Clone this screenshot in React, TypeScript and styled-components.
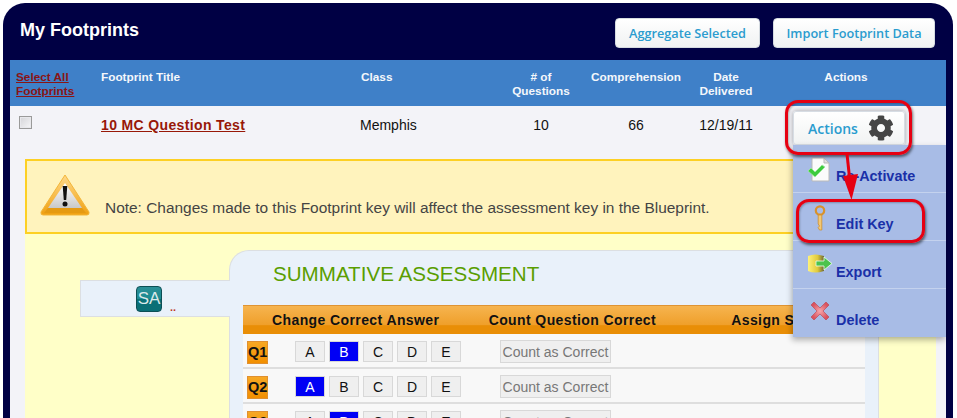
import styled, { createGlobalStyle } from "styled-components";
import { FaCog } from "react-icons/fa";

const questions = [
  { id: "Q1", correct: "B" },
  { id: "Q2", correct: "A" },
  { id: "Q3", correct: "B" },
];
const choices = ["A", "B", "C", "D", "E"];

const GlobalStyle = createGlobalStyle`
  html, body {
    margin: 0;
    padding: 0;
    background: #fff;
    font-family: "Liberation Sans", Arial, sans-serif;
  }
`;

const Page = styled.div`
  position: relative;
  width: 957px;
  height: 418px;
  overflow: hidden;
  padding: 3px 4px 0 3px;
  box-sizing: border-box;
`;

const Panel = styled.div`
  height: 415px;
  background: #000044;
  border-radius: 22px 22px 0 0;
  padding: 0 7px;
`;

const TopBar = styled.header`
  height: 57px;
  display: flex;
  align-items: flex-start;
  padding: 15px 11px 0 10px;
  box-sizing: border-box;
`;

const Title = styled.h1`
  margin: 0 auto 0 0;
  font-size: 18px;
  line-height: 24px;
  font-weight: 700;
  color: #fff;
`;

const TopButton = styled.button`
  height: 30px;
  margin-left: 13px;
  padding: 0;
  width: ${(p: { $w: number }) => p.$w}px;
  background: linear-gradient(#fff, #f0f2f2);
  border: 1px solid #d5dbe0;
  border-radius: 4px;
  color: #2a9ccf;
  font-family: "Open Sans", sans-serif;
  font-size: 12.7px;
  font-weight: 600;
`;

const gridColumns = "91px 260px 140px 80px 110px 70px 170px";

const HeadRow = styled.div`
  height: 46px;
  display: grid;
  grid-template-columns: ${gridColumns};
  background: #3f80c8;
  padding-top: 10px;
  box-sizing: border-box;
  color: #f4f7fb;
  font-size: 11.8px;
  font-weight: 700;
  line-height: 14px;
`;

const HeadCell = styled.div<{ $center?: boolean }>`
  text-align: ${(p) => (p.$center ? "center" : "left")};
`;

const SelectAll = styled.a`
  display: block;
  padding-left: 6px;
  color: #8a1414;
  text-decoration: underline;
`;

const Body = styled.div`
  height: 312px;
  background: #f3f3f8;
  overflow: hidden;
`;

const ItemRow = styled.div`
  height: 53px;
  display: grid;
  grid-template-columns: ${gridColumns};
  font-size: 14px;
  color: #111;
`;

const ItemCell = styled.div<{ $center?: boolean; $shift?: number }>`
  padding-top: 11px;
  margin-left: ${(p) => p.$shift ?? 0}px;
  line-height: 16px;
  text-align: ${(p) => (p.$center ? "center" : "left")};
`;

const Check = styled.input`
  appearance: none;
  box-sizing: border-box;
  display: block;
  margin: 10px 0 0 9px;
  width: 13px;
  height: 13px;
  background: linear-gradient(135deg, #d4d4d8, #f6f6f8);
  border: 1px solid #9a9a9a;
  box-shadow: inset 0 0 0 1px #e8e8ec;
`;

const ItemLink = styled.a`
  font-size: 14px;
  font-weight: 700;
  letter-spacing: 0.36px;
  color: #981808;
  text-decoration: underline;
`;

const ActionsButton = styled.button`
  margin: 5px 0 0 32px;
  width: 112px;
  height: 34px;
  display: flex;
  align-items: center;
  gap: 10px;
  padding: 0 0 0 14px;
  background: linear-gradient(#fff, #f1f3f3);
  border: 1px solid #d7dde4;
  border-radius: 3px;
  box-shadow: 0 0 5px rgba(0, 0, 0, 0.35);
  color: #2a9ccf;
  font-family: "Open Sans", sans-serif;
  font-size: 14px;
  font-weight: 600;

  svg {
    color: #454545;
  }
`;

const Detail = styled.div`
  margin: 0 10px 0 15px;
`;

const Notice = styled.div`
  height: 75px;
  box-sizing: border-box;
  display: flex;
  gap: 15px;
  padding: 13px 0 0 13px;
  background: #fff3bd;
  border: 2px solid #fdd024;
  color: #444;
  font-size: 15.45px;

  span {
    margin-top: 25px;
    line-height: 18px;
    white-space: nowrap;
  }
`;

const KeyArea = styled.div`
  height: 185px;
  display: flex;
  align-items: flex-start;
  padding: 16px 0 0 55px;
  background: #ffffc8;
`;

const SideTab = styled.div`
  position: relative;
  z-index: 1;
  width: 150px;
  height: 37px;
  margin-top: 30px;
  margin-right: -1px;
  display: flex;
  padding: 5px 0 0 55px;
  box-sizing: border-box;
  background: #e9f1fa;
  border: 1px solid #dcdfe2;
  border-right: 0;
`;

const Badge = styled.div`
  width: 26px;
  height: 26px;
  box-sizing: border-box;
  border: 1px solid #0c4f55;
  border-radius: 4px;
  background: linear-gradient(#2a8f96 0%, #1c8a90 50%, #0a7076 52%, #0a6f76 100%);
  color: #dbe9ea;
  font-size: 17px;
  line-height: 24px;
  text-align: center;
`;

const Dots = styled.span`
  margin: 14px 0 0 8px;
  color: #c0392b;
  font-size: 11px;
  font-weight: 700;
  line-height: 14px;
`;

const AssessBox = styled.section`
  width: 650px;
  height: 180px;
  box-sizing: border-box;
  padding: 0 13px;
  background: #e9f1fa;
  border: 1px solid #dcdfe2;
  border-bottom: 0;
  border-top-left-radius: 20px;
`;

const AssessTitle = styled.h2`
  margin: 10px 0 19px 30px;
  font-size: 20.6px;
  line-height: 25px;
  font-weight: 400;
  color: #5a9e00;
`;

const QHead = styled.div`
  height: 29px;
  box-sizing: border-box;
  display: flex;
  padding-top: 5px;
  border-top: 1px solid #df9433;
  background: linear-gradient(#f6b44f 0%, #ef9f2a 68%, #e98e06 70%, #e98e06 100%);
  color: #111;
  font-size: 14px;
  font-weight: 700;
  line-height: 18px;
  letter-spacing: 0.4px;
`;

const QHeadCell = styled.div<{ $w: number; $pad?: number }>`
  width: ${(p) => p.$w}px;
  box-sizing: border-box;
  padding-left: ${(p) => p.$pad ?? 0}px;
  white-space: nowrap;
`;

const QRow = styled.div`
  height: 35px;
  box-sizing: border-box;
  display: flex;
  align-items: flex-start;
  padding: 6px 0 0 4px;
  background: #f8f8f8;
  border-bottom: 2px solid #dedede;
`;

const QLabel = styled.div`
  width: 21px;
  height: 23px;
  margin: 1px 27px 0 0;
  background: linear-gradient(#f7a824, #f28f00);
  border: 1px solid #e09030;
  box-sizing: border-box;
  color: #111;
  font-size: 14.5px;
  font-weight: 700;
  line-height: 21px;
  text-align: center;
`;

const ChoiceGroup = styled.div`
  display: flex;
  gap: 4px;
  margin-top: 1px;
  margin-right: 39px;
`;

const Choice = styled.button<{ $on: boolean }>`
  width: 30px;
  height: 21px;
  padding: 0;
  box-sizing: border-box;
  background: ${(p) => (p.$on ? "#0000f5" : "#efefef")};
  border: 1px solid #d8d8d8;
  color: ${(p) => (p.$on ? "#fff" : "#111")};
  font-family: "Liberation Sans", sans-serif;
  font-size: 14px;
`;

const CountButton = styled.button`
  width: 111px;
  height: 23px;
  padding: 0;
  box-sizing: border-box;
  background: #efefef;
  border: 1px solid #d8d8d8;
  color: #777;
  font-family: "Liberation Sans", sans-serif;
  font-size: 14px;
`;

const Menu = styled.nav`
  position: absolute;
  z-index: 2;
  left: 793px;
  top: 145px;
  width: 153px;
  background: #a8bce6;
  box-shadow: -1px 3px 6px rgba(0, 0, 0, 0.3);
`;

const MenuItem = styled.a`
  height: 48px;
  box-sizing: border-box;
  display: flex;
  gap: 0;
  padding: 12px 0 0 14px;
  border-bottom: 1px solid #c4d2ee;
  color: #1a30a8;
  font-size: 14.4px;
  font-weight: 700;

  &:last-child {
    border-bottom: 0;
  }

  svg {
    flex: none;
  }

  span {
    position: absolute;
    left: 43px;
    margin-top: 11px;
    line-height: 16px;
  }
`;

const Highlight = styled.div<{ $x: number; $y: number; $w: number; $h: number }>`
  position: absolute;
  z-index: 3;
  left: ${(p) => p.$x}px;
  top: ${(p) => p.$y}px;
  width: ${(p) => p.$w}px;
  height: ${(p) => p.$h}px;
  box-sizing: border-box;
  border: 3px solid #e60012;
  border-radius: 13px;
  box-shadow: 1px 2px 3px rgba(0, 0, 0, 0.55), inset 1px 1px 2px rgba(0, 0, 0, 0.25);
`;

const ArrowSvg = styled.svg`
  position: absolute;
  z-index: 3;
  left: 835px;
  top: 152px;
`;

function WarningIcon() {
  return (
    <svg width="50" height="42" viewBox="0 0 50 42">
      <defs>
        <linearGradient id="warnEdge" x1="0" y1="0" x2="0" y2="1">
          <stop offset="0" stopColor="#ffd98a" />
          <stop offset="1" stopColor="#f0a010" />
        </linearGradient>
        <linearGradient id="warnFace" x1="0" y1="0" x2="0" y2="1">
          <stop offset="0" stopColor="#ffffff" />
          <stop offset="1" stopColor="#c8c8c8" />
        </linearGradient>
      </defs>
      <path d="M25 1 L49 38 Q49.5 41 47 41 L3 41 Q.5 41 1 38 Z" fill="url(#warnEdge)" stroke="#f3b63a" strokeWidth="1" strokeLinejoin="round" />
      <path d="M25 9 L42 34 L8 34 Z" fill="url(#warnFace)" />
      <path d="M8 34 L42 34 L46 39 L4 39 Z" fill="#e59a12" />
      <path d="M22.7 12 L27.3 12 L26.2 26 L23.8 26 Z" fill="#111" />
      <circle cx="25" cy="30" r="2.5" fill="#111" />
    </svg>
  );
}

function PageCheckIcon() {
  return (
    <svg width="24" height="26" viewBox="0 0 24 26">
      <path d="M5 1 L17 1 L22 6 L22 24 L5 24 Z" fill="#fbfbfb" stroke="#b9b9b9" />
      <path d="M17 1 L17 6 L22 6 Z" fill="#dedede" stroke="#b9b9b9" />
      <path d="M1 14 L4 11 L8 15 L15 8 L18 10 L8 20 Z" fill="#3ecb3e" stroke="#9ee89e" strokeWidth="0.8" />
    </svg>
  );
}

function KeyIcon() {
  return (
    <svg width="20" height="26" viewBox="-6 0 20 26">
      <circle cx="7" cy="5.5" r="4.2" fill="none" stroke="#d9922a" strokeWidth="2.2" />
      <path d="M5.2 10 L8.8 10 L8.8 25 L6.5 25 L5.2 22.5 L6.5 21 L5.2 19 Z" fill="#f3c873" stroke="#cf8f2c" strokeWidth="0.8" />
    </svg>
  );
}

function ExportIcon() {
  return (
    <svg width="26" height="22" viewBox="0 0 26 22">
      <defs>
        <linearGradient id="drum" x1="0" y1="0" x2="1" y2="0">
          <stop offset="0" stopColor="#fff27a" />
          <stop offset="0.6" stopColor="#e0ca3c" />
          <stop offset="1" stopColor="#6d6a35" />
        </linearGradient>
      </defs>
      <path d="M1 3 Q8 0 17 3 L17 18 Q8 21 1 18 Z" fill="url(#drum)" />
      <path d="M9 8 L17 8 L17 4 L25 10.5 L17 17 L17 13 L9 13 Z" fill="#4cc34c" stroke="#f0fff0" strokeWidth="0.8" />
    </svg>
  );
}

function DeleteIcon() {
  return (
    <svg width="25" height="22" viewBox="-3 0 25 22">
      <defs>
        <radialGradient id="crossFill">
          <stop offset="0" stopColor="#f7a5ab" />
          <stop offset="1" stopColor="#d9525e" />
        </radialGradient>
      </defs>
      <path d="M4 1 L10 7 L16 1 L19 4 L13 10 L19 16 L16 19 L10 13 L4 19 L1 16 L7 10 L1 4 Z" fill="url(#crossFill)" stroke="#b9424e" strokeWidth="0.6" />
    </svg>
  );
}

const menuItems = [
  { label: "Re-Activate", icon: <PageCheckIcon /> },
  { label: "Edit Key", icon: <KeyIcon /> },
  { label: "Export", icon: <ExportIcon /> },
  { label: "Delete", icon: <DeleteIcon /> },
];

function App() {
  return (
    <Page>
      <GlobalStyle />
      <Panel>
        <TopBar>
          <Title>My Footprints</Title>
          <TopButton $w={145}>Aggregate Selected</TopButton>
          <TopButton $w={162}>Import Footprint Data</TopButton>
        </TopBar>
        <HeadRow>
          <HeadCell>
            <SelectAll>
              Select All
              <br />
              Footprints
            </SelectAll>
          </HeadCell>
          <HeadCell>Footprint Title</HeadCell>
          <HeadCell>Class</HeadCell>
          <HeadCell $center>
            # of
            <br />
            Questions
          </HeadCell>
          <HeadCell $center>Comprehension</HeadCell>
          <HeadCell $center>
            Date
            <br />
            Delivered
          </HeadCell>
          <HeadCell $center>Actions</HeadCell>
        </HeadRow>
        <Body>
          <ItemRow>
            <div>
              <Check type="checkbox" />
            </div>
            <ItemCell>
              <ItemLink>10 MC Question Test</ItemLink>
            </ItemCell>
            <ItemCell $shift={-1}>Memphis</ItemCell>
            <ItemCell $center>10</ItemCell>
            <ItemCell $center>66</ItemCell>
            <ItemCell $center>12/19/11</ItemCell>
            <div>
              <ActionsButton>
                Actions
                <FaCog size={26} />
              </ActionsButton>
            </div>
          </ItemRow>
          <Detail>
            <Notice>
              <WarningIcon />
              <span>Note: Changes made to this Footprint key will affect the assessment key in the Blueprint.</span>
            </Notice>
            <KeyArea>
              <SideTab>
                <Badge>SA</Badge>
                <Dots>..</Dots>
              </SideTab>
              <AssessBox>
                <AssessTitle>SUMMATIVE ASSESSMENT</AssessTitle>
                <QHead>
                  <QHeadCell $w={246} $pad={29}>Change Correct Answer</QHeadCell>
                  <QHeadCell $w={242}>Count Question Correct</QHeadCell>
                  <QHeadCell $w={135} $pad={1}>Assign Standards</QHeadCell>
                </QHead>
                {questions.map((q) => (
                  <QRow key={q.id}>
                    <QLabel>{q.id}</QLabel>
                    <ChoiceGroup>
                      {choices.map((c) => (
                        <Choice key={c} $on={c === q.correct}>
                          {c}
                        </Choice>
                      ))}
                    </ChoiceGroup>
                    <CountButton>Count as Correct</CountButton>
                  </QRow>
                ))}
              </AssessBox>
            </KeyArea>
          </Detail>
        </Body>
      </Panel>
      <Menu>
        {menuItems.map((m) => (
          <MenuItem key={m.label}>
            {m.icon}
            <span>{m.label}</span>
          </MenuItem>
        ))}
      </Menu>
      <Highlight $x={785} $y={100} $w={127} $h={55} />
      <Highlight $x={796} $y={199} $w={129} $h={44} />
      <ArrowSvg width="30" height="52" viewBox="0 0 30 52">
        <path d="M12 2 L15 30" stroke="#e60012" strokeWidth="3" fill="none" />
        <path d="M8 24 L23 22 L16.5 48 Z" fill="#e60012" />
      </ArrowSvg>
    </Page>
  );
}

export default App;
